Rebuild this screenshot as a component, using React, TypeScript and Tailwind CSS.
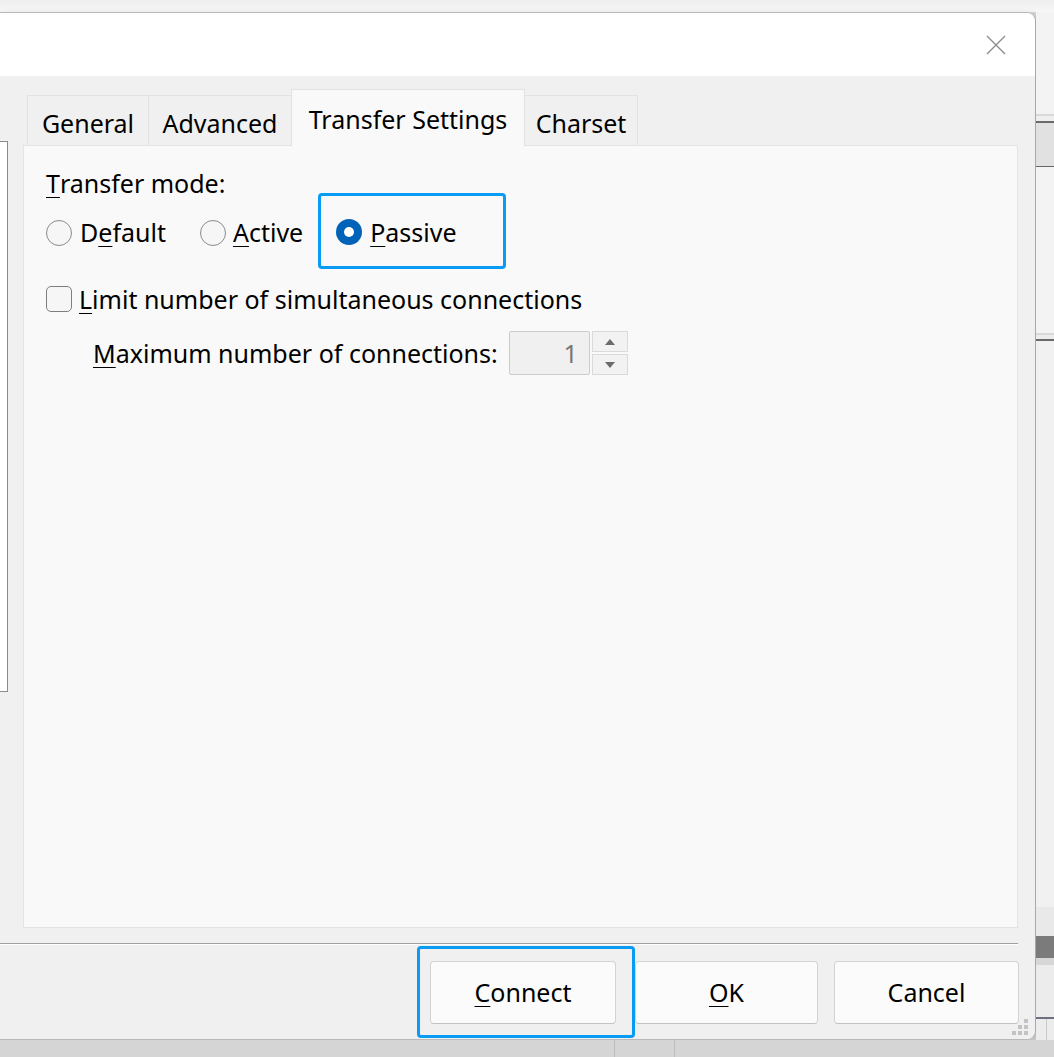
import React from 'react';

const font = "font-['Noto_Sans','Open_Sans',sans-serif]";

function Radio({ checked = false, className = '' }: { checked?: boolean; className?: string }) {
  if (checked) {
    return (
      <span className={`flex h-[26px] w-[26px] shrink-0 items-center justify-center rounded-full bg-[#0063b8] ${className}`}>
        <span className="h-[10px] w-[10px] rounded-full bg-white" />
      </span>
    );
  }
  return <span className={`block h-[26px] w-[26px] shrink-0 rounded-full border border-[#8b8b8b] bg-[#f6f6f6] ${className}`} />;
}

function Tab({ label, width, active = false }: { label: string; width: string; active?: boolean }) {
  if (active) {
    return (
      <div
        className={`relative z-10 -mb-px -ml-px flex h-[57px] items-center justify-center border border-b-0 border-[#e2e2e2] bg-[#f9f9f9] pt-[3px] ${width}`}
      >
        {label}
      </div>
    );
  }
  return (
    <div className={`-ml-px flex h-[50px] items-center justify-center border border-b-0 border-[#e2e2e2] bg-[#f0f0f0] pt-[6px] first:ml-0 ${width}`}>
      {label}
    </div>
  );
}

function Button({ children, width }: { children: React.ReactNode; width: string }) {
  return (
    <div
      className={`flex h-[63px] items-center justify-center rounded-[4px] border border-[#d3d3d3] border-b-[#c2c2c2] bg-[#fbfbfb] ${width}`}
    >
      {children}
    </div>
  );
}

function SideStrip() {
  return (
    <div className="flex w-[18px] flex-col bg-[#f1f1f1]">
      <div className="h-[102px] bg-[#f3f3f3]" />
      <div className="h-[2px] bg-[#d9d9d9]" />
      <div className="h-[5px] bg-[#eeeeee]" />
      <div className="h-[2px] bg-[#6a6a6a]" />
      <div className="h-[43px] bg-[#e1e1e1]" />
      <div className="h-[1px] bg-[#666666]" />
      <div className="h-[166px] bg-[#f3f3f3]" />
      <div className="h-[2px] bg-[#d9d9d9]" />
      <div className="h-[4px] bg-[#ececec]" />
      <div className="h-[2px] bg-[#6a6a6a]" />
      <div className="h-[566px] bg-[#f1f1f1]" />
      <div className="h-[29px] bg-[#e9e9e9]" />
      <div className="h-[22px] bg-[#7b7b7b]" />
      <div className="h-[7px] bg-[#d7d7d7]" />
      <div className="h-[52px] bg-[#ececec]" />
      <div className="h-[2px] bg-[#6e7080]" />
      <div className="flex flex-1 bg-[#ececec]">
        <div className="ml-[10px] w-px bg-[#c8c8c8]" />
      </div>
    </div>
  );
}

export default function App() {
  return (
    <div className={`flex h-[1057px] w-[1054px] flex-col overflow-hidden bg-[#d6d6d6] text-[25px] text-black ${font}`}>
      <div className="h-[12px] bg-gradient-to-b from-[#eeeeee] to-[#f7f7f7]" />
      <div className="flex h-[1028px]">
        <div className="flex w-[1036px] flex-col overflow-hidden rounded-r-[9px] border border-l-0 border-[#b9b9b9] border-r-[#a9a9a9] shadow-[2px_2px_6px_rgba(0,0,0,0.15)]">
          <div className="flex h-[63px] shrink-0 items-center justify-end bg-white pr-[28px]">
            <svg width="22" height="22" viewBox="0 0 22 22">
              <path d="M2 2 L20 20 M20 2 L2 20" stroke="#8d8d8d" strokeWidth="1.4" />
            </svg>
          </div>

          <div className="relative flex flex-1 flex-col bg-[#f0f0f0]">
            <div className="flex pt-[13px]">
              <div className="mt-[52px] h-[551px] w-[8px] shrink-0 border border-l-0 border-[#8a8a90] bg-white" />
              <div className="ml-[15px] mr-[17px] flex flex-1 flex-col">
                <div className="flex h-[56px] items-end pl-[4px]">
                  <Tab label="General" width="w-[122px]" />
                  <Tab label="Advanced" width="w-[144px]" />
                  <Tab label="Transfer Settings" width="w-[234px]" active />
                  <Tab label="Charset" width="w-[114px]" />
                </div>
                <div className="flex h-[783px] flex-col border border-[#e4e4e4] bg-[#f9f9f9] pl-[22px]">
                  <div className="mt-[27px] flex h-[20px] items-center leading-none">
                    <span className="underline decoration-1 underline-offset-[4px]">T</span>ransfer mode:
                  </div>
                  <div className="flex h-[76px] items-center leading-none">
                    <div className="flex h-[76px] items-center pt-[3px]">
                      <Radio />
                      <span className="ml-[8px]">
                        D<span className="underline decoration-1 underline-offset-[4px]">e</span>fault
                      </span>
                      <Radio className="ml-[34px]" />
                      <span className="ml-[7px]">
                        <span className="underline decoration-1 underline-offset-[4px]">A</span>ctive
                      </span>
                    </div>
                    <div className="ml-[15px] flex h-[76px] w-[188px] items-center rounded-[4px] border-[3px] border-[#0a9cf5] pl-[15px] pt-[2px]">
                      <Radio checked />
                      <span className="ml-[8px]">
                        <span className="underline decoration-1 underline-offset-[4px]">P</span>assive
                      </span>
                    </div>
                  </div>
                  <div className="flex h-[58px] items-center pt-[2px] leading-none">
                    <span className="h-[26px] w-[26px] shrink-0 rounded-[5px] border border-[#7e7e7e] bg-[#f6f6f6]" />
                    <span className="ml-[7px]">
                      <span className="underline decoration-1 underline-offset-[4px]">L</span>imit number of simultaneous connections
                    </span>
                  </div>
                  <div className="mt-[4px] flex h-[44px] items-center pl-[47px] leading-none">
                    <span>
                      <span className="underline decoration-1 underline-offset-[4px]">M</span>aximum number of connections:
                    </span>
                    <div className="ml-[11px] flex h-[44px] w-[81px] items-center justify-end rounded-[2px] border border-[#cccccc] bg-[#f0f0f0] pr-[11px] text-[#777777]">
                      1
                    </div>
                    <div className="ml-[2px] flex h-[44px] w-[36px] flex-col gap-[2px]">
                      <div className="flex h-[21px] items-center justify-center border border-[#dadada] bg-[#f2f2f2]">
                        <svg width="10" height="6" viewBox="0 0 10 6">
                          <path d="M0 6 L5 0 L10 6 Z" fill="#6b6b6b" />
                        </svg>
                      </div>
                      <div className="flex h-[21px] items-center justify-center border border-[#dadada] bg-[#f2f2f2]">
                        <svg width="10" height="6" viewBox="0 0 10 6">
                          <path d="M0 0 L10 0 L5 6 Z" fill="#6b6b6b" />
                        </svg>
                      </div>
                    </div>
                  </div>
                </div>
              </div>
            </div>

            <div className="mr-[17px] mt-[15px] h-px bg-[#a0a0a0]" />
            <div className="mr-[17px] h-px bg-white" />

            <div className="mt-px flex h-[92px] items-start pt-[15px]">
              <div className="relative ml-[430px]">
                <div className="absolute -bottom-[14px] -left-[13px] -right-[19px] -top-[15px] rounded-[4px] border-[3px] border-[#0a9cf5]" />
                <Button width="w-[186px]">
                  <span>
                    <span className="underline decoration-1 underline-offset-[4px]">C</span>onnect
                  </span>
                </Button>
              </div>
              <div className="ml-[19px]">
                <Button width="w-[183px]">
                  <span>
                    <span className="underline decoration-1 underline-offset-[4px]">O</span>K
                  </span>
                </Button>
              </div>
              <div className="ml-[16px]">
                <Button width="w-[185px]">Cancel</Button>
              </div>
            </div>

            <svg className="absolute bottom-[3px] right-[6px]" width="18" height="18" viewBox="0 0 18 18">
              <rect x="13" y="1" width="4" height="4" fill="#c3c3c3" />
              <rect x="7" y="7" width="4" height="4" fill="#c3c3c3" />
              <rect x="13" y="7" width="4" height="4" fill="#c3c3c3" />
              <rect x="1" y="13" width="4" height="4" fill="#c3c3c3" />
              <rect x="7" y="13" width="4" height="4" fill="#c3c3c3" />
              <rect x="13" y="13" width="4" height="4" fill="#c3c3c3" />
            </svg>
          </div>
        </div>
        <SideStrip />
      </div>
      <div className="flex flex-1 bg-[#d5d5d5]">
        <div className="ml-[614px] w-px bg-[#bcbcbc]" />
        <div className="ml-[59px] w-px bg-[#bcbcbc]" />
      </div>
    </div>
  );
}
